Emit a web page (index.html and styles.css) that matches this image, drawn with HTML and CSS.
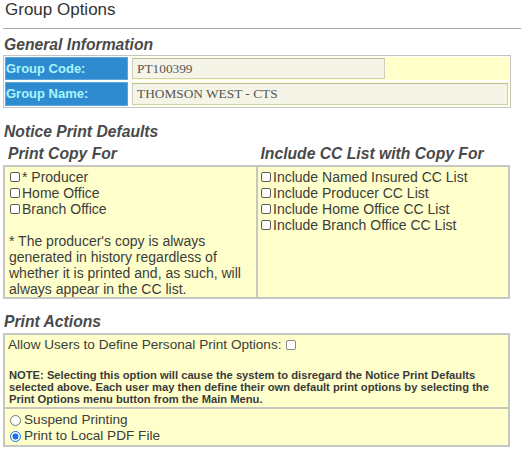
FILE: index.html
```html
<!DOCTYPE html>
<html lang="en">
<head>
<meta charset="utf-8">
<title>Group Options</title>
<link rel="stylesheet" href="styles.css">
</head>
<body>
<div class="page">
  <h1 class="page-title">Group Options</h1>
  <div class="rule"></div>

  <h2 class="section-title">General Information</h2>
  <div class="info">
    <div class="info-label">Group Code:</div>
    <div class="info-value"><input class="field field-short" type="text" value="PT100399" readonly></div>
    <div class="info-label info-label-tall">Group Name:</div>
    <div class="info-value"><input class="field field-long" type="text" value="THOMSON WEST - CTS" readonly></div>
  </div>

  <h2 class="section-title section-gap">Notice Print Defaults</h2>
  <div class="columns-head">
    <h3 class="column-title">Print Copy For</h3>
    <h3 class="column-title column-title-right">Include CC List with Copy For</h3>
  </div>
  <div class="box columns">
    <div class="cell">
      <label class="opt"><input class="check" type="checkbox">* Producer</label>
      <label class="opt"><input class="check" type="checkbox">Home Office</label>
      <label class="opt"><input class="check" type="checkbox">Branch Office</label>
      <p class="footnote">* The producer's copy is always generated in history regardless of whether it is printed and, as such, will always appear in the CC list.</p>
    </div>
    <div class="cell cell-right">
      <label class="opt"><input class="check" type="checkbox">Include Named Insured CC List</label>
      <label class="opt"><input class="check" type="checkbox">Include Producer CC List</label>
      <label class="opt"><input class="check" type="checkbox">Include Home Office CC List</label>
      <label class="opt"><input class="check" type="checkbox">Include Branch Office CC List</label>
    </div>
  </div>

  <h2 class="section-title actions-gap">Print Actions</h2>
  <div class="box actions">
    <div class="row">
      <label class="opt">Allow Users to Define Personal Print Options: <input class="check check-inline" type="checkbox"></label>
      <p class="note">NOTE: Selecting this option will cause the system to disregard the Notice Print Defaults selected above. Each user may then define their own default print options by selecting the Print Options menu button from the Main Menu.</p>
    </div>
    <div class="row row-split">
      <label class="opt"><input class="radio" type="radio" name="action">Suspend Printing</label>
      <label class="opt"><input class="radio" type="radio" name="action" checked>Print to Local PDF File</label>
    </div>
  </div>
</div>
</body>
</html>
```

FILE: styles.css
```css
* {
  box-sizing: border-box;
}

body {
  margin: 0;
  background: #ffffff;
  font-family: "Liberation Sans", Arial, sans-serif;
  color: #3a3a3a;
}

.page {
  width: 521px;
  padding: 0 0 0 3px;
}

.page-title {
  margin: 0 0 0 2px;
  font-size: 17px;
  line-height: 20px;
  font-weight: normal;
  color: #333333;
}

.rule {
  margin-top: 8px;
  height: 1px;
  background: #a9a9a9;
}

.section-title {
  margin: 7px 0 0 1px;
  font-size: 15.7px;
  line-height: 18px;
  font-weight: bold;
  font-style: italic;
  color: #4a4a4a;
}

.section-gap {
  margin-top: 15px;
}

.actions-gap {
  margin-top: 14px;
}

/* general information table */
.info {
  width: 508px;
  margin-top: 1px;
  border: 1px solid #c3c3c3;
  padding: 1px;
  display: grid;
  grid-template-columns: 123px 1fr;
  column-gap: 3px;
  row-gap: 2px;
}

.info-label {
  background: #2f8bcf;
  color: #a9f6ff;
  font-size: 13px;
  font-weight: bold;
  line-height: 21px;
  padding-left: 0;
  border: 1px solid #5aa6dc;
}

.info-label-tall {
  line-height: 22px;
}

.info-value {
  background: #ffffc9;
  padding: 1px;
  display: flex;
  align-items: stretch;
}

.field {
  height: 22px;
  border: 1px solid #cfcfc0;
  border-top-color: #b9b9ad;
  background: #f5f5e7;
  font-family: "Liberation Serif", "Times New Roman", serif;
  font-size: 13.33px;
  color: #555555;
  padding: 0 4px;
  outline: none;
}

.field-short {
  width: 253px;
  height: 21px;
}

.field-long {
  width: 100%;
}

/* notice print defaults */
.columns-head {
  width: 507px;
  display: grid;
  grid-template-columns: 1fr 1fr;
  margin-top: 4px;
}

.column-title {
  margin: 0 0 0 5px;
  font-size: 15.7px;
  line-height: 18px;
  font-weight: bold;
  font-style: italic;
  color: #4a4a4a;
}

.column-title-right {
  margin-left: 4px;
}

.box {
  width: 507px;
  border: 2px solid #c6c6c2;
  background: #ffffcb;
  font-size: 14px;
  line-height: 16px;
  color: #3c3c3c;
}

.columns {
  margin-top: 2px;
  display: grid;
  grid-template-columns: 251px 1fr;
}

.cell {
  padding: 2px 3px 0 4px;
}

.cell-right {
  border-left: 2px solid #c6c6c2;
  padding-left: 2px;
}

.opt {
  display: flex;
  align-items: center;
  white-space: nowrap;
}

.check {
  appearance: none;
  -webkit-appearance: none;
  width: 10px;
  height: 10px;
  margin: 0 2px 0 1px;
  border: 1px solid #5c5c5c;
  border-radius: 2px;
  background: #ffffff;
  flex: none;
}

.check-inline {
  margin-left: 4px;
  border-color: #8a8a8a;
}

.radio {
  appearance: none;
  -webkit-appearance: none;
  width: 11px;
  height: 11px;
  margin: 0 3px 0 2px;
  border: 1px solid #777777;
  border-radius: 50%;
  background: #ffffff;
  flex: none;
}

.radio:checked {
  border-color: #1a73e8;
  background: radial-gradient(circle, #1a73e8 0 2.8px, #ffffff 3.3px);
}

.footnote {
  margin: 16px 0 0 0;
  white-space: normal;
}

/* print actions */
.actions {
  margin-top: 2px;
  font-size: 13.6px;
}

.row {
  padding: 2px 3px 2px 3px;
}

.row-split {
  border-top: 2px solid #c6c6c2;
  padding-top: 3px;
  padding-bottom: 1px;
}

.note {
  margin: 16px 0 0 1px;
  font-size: 11.2px;
  line-height: 12px;
  font-weight: bold;
  color: #3a3a3a;
}
```
